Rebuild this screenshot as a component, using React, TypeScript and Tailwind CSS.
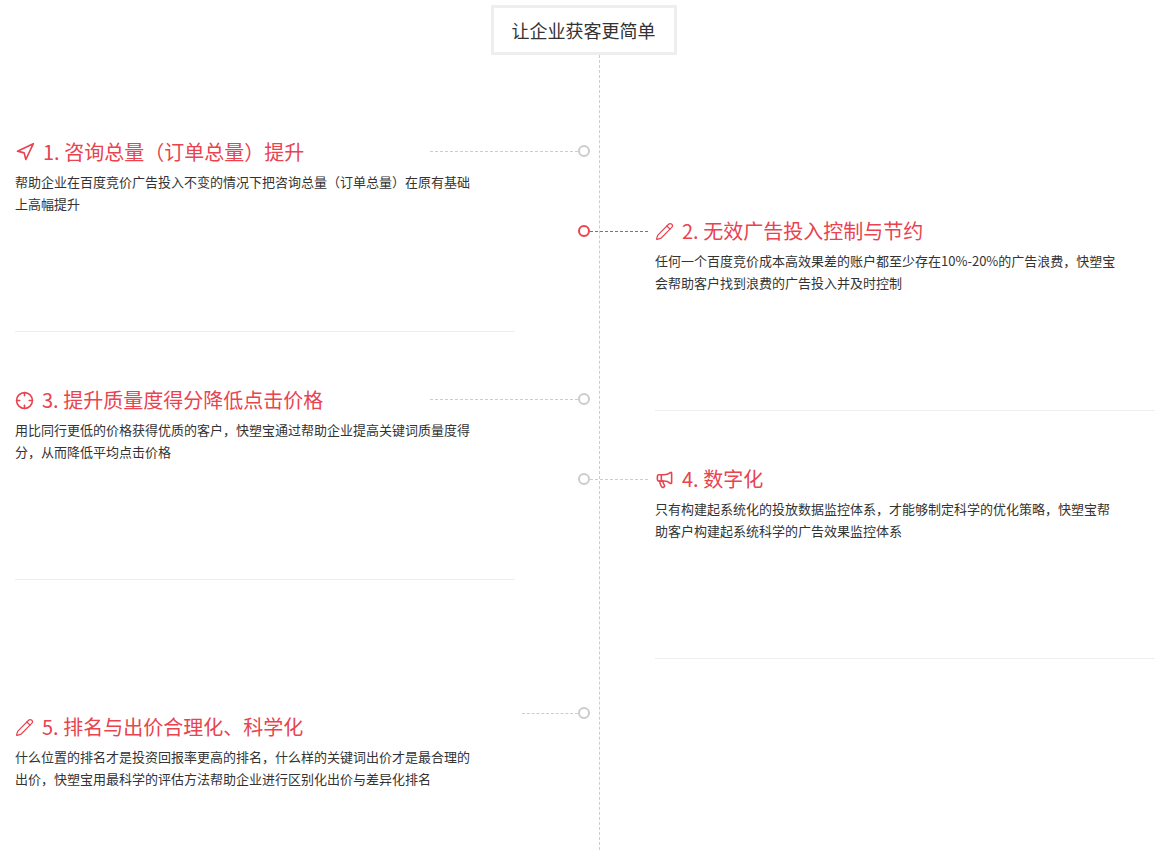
import { Navigation, Pencil, Crosshair, Megaphone } from 'lucide-react';
import type { ReactNode } from 'react';

const font = { fontFamily: '"Noto Sans CJK SC", "Liberation Sans", sans-serif' };

const Item = ({ icon, title, lines }: { icon: ReactNode; title: string; lines: string[] }) => (
  <div className="h-[191px]">
    <div className="flex h-6 items-center gap-2 text-[20px] text-[#e8434f]">
      {icon}
      <span>{title}</span>
    </div>
    <div className="mt-[7px] text-[13px] leading-[22px] text-[#333]">
      {lines.map((l) => (
        <div key={l}>{l}</div>
      ))}
    </div>
  </div>
);

const Sep = () => <div className="h-px bg-[#eee]" />;

const Dot = ({ red, top }: { red?: boolean; top: number }) => (
  <div
    className={`absolute left-[578px] h-3 w-3 rounded-full border-2 bg-white ${red ? 'border-[#e8434f]' : 'border-[#ccc]'}`}
    style={{ top }}
  />
);

const Dash = ({ left, width, top, red }: { left: number; width: number; top: number; red?: boolean }) => (
  <div
    className={`absolute border-t border-dashed ${red ? 'border-[#e8434f]' : 'border-[#ccc]'}`}
    style={{ left, width, top }}
  />
);

export default function App() {
  return (
    <div className="relative h-[851px] w-[1167px] overflow-hidden bg-white" style={font}>
      <div className="absolute left-[599px] top-[55px] h-[800px] border-l border-dashed border-[#ccc]" />
      <div className="flex justify-center pt-[5px]">
        <div className="relative z-10 flex h-[50px] w-[186px] items-center justify-center border-[3px] border-[#eee] bg-white text-[18px] text-[#333]">
          让企业获客更简单
        </div>
      </div>

      <Dash left={430} width={148} top={151} />
      <Dot top={145} />
      <Dash left={590} width={58} top={231} red />
      <Dot top={225} red />
      <Dash left={430} width={148} top={399} />
      <Dot top={393} />
      <Dash left={590} width={58} top={479} />
      <Dot top={473} />
      <Dash left={522} width={56} top={713} />
      <Dot top={707} />

      <div className="flex">
        <div className="ml-[15px] w-[500px] pt-[85px]">
          <Item
            icon={<Navigation size={20} strokeWidth={2} className="rotate-[0deg]" />}
            title="1. 咨询总量（订单总量）提升"
            lines={['帮助企业在百度竞价广告投入不变的情况下把咨询总量（订单总量）在原有基础', '上高幅提升']}
          />
          <Sep />
          <div className="h-[56px]" />
          <Item
            icon={<Crosshair size={19} strokeWidth={2} />}
            title="3. 提升质量度得分降低点击价格"
            lines={['用比同行更低的价格获得优质的客户，快塑宝通过帮助企业提高关键词质量度得', '分，从而降低平均点击价格']}
          />
          <Sep />
          <div className="h-[135px]" />
          <Item
            icon={<Pencil size={19} strokeWidth={1.5} />}
            title="5. 排名与出价合理化、科学化"
            lines={['什么位置的排名才是投资回报率更高的排名，什么样的关键词出价才是最合理的', '出价，快塑宝用最科学的评估方法帮助企业进行区别化出价与差异化排名']}
          />
        </div>
        <div className="ml-[140px] w-[500px] pt-[164px]">
          <Item
            icon={<Pencil size={19} strokeWidth={1.5} />}
            title="2. 无效广告投入控制与节约"
            lines={['任何一个百度竞价成本高效果差的账户都至少存在10%-20%的广告浪费，快塑宝', '会帮助客户找到浪费的广告投入并及时控制']}
          />
          <Sep />
          <div className="h-[56px]" />
          <Item
            icon={<Megaphone size={19} strokeWidth={2} />}
            title="4. 数字化"
            lines={['只有构建起系统化的投放数据监控体系，才能够制定科学的优化策略，快塑宝帮', '助客户构建起系统科学的广告效果监控体系']}
          />
          <Sep />
        </div>
      </div>
    </div>
  );
}
